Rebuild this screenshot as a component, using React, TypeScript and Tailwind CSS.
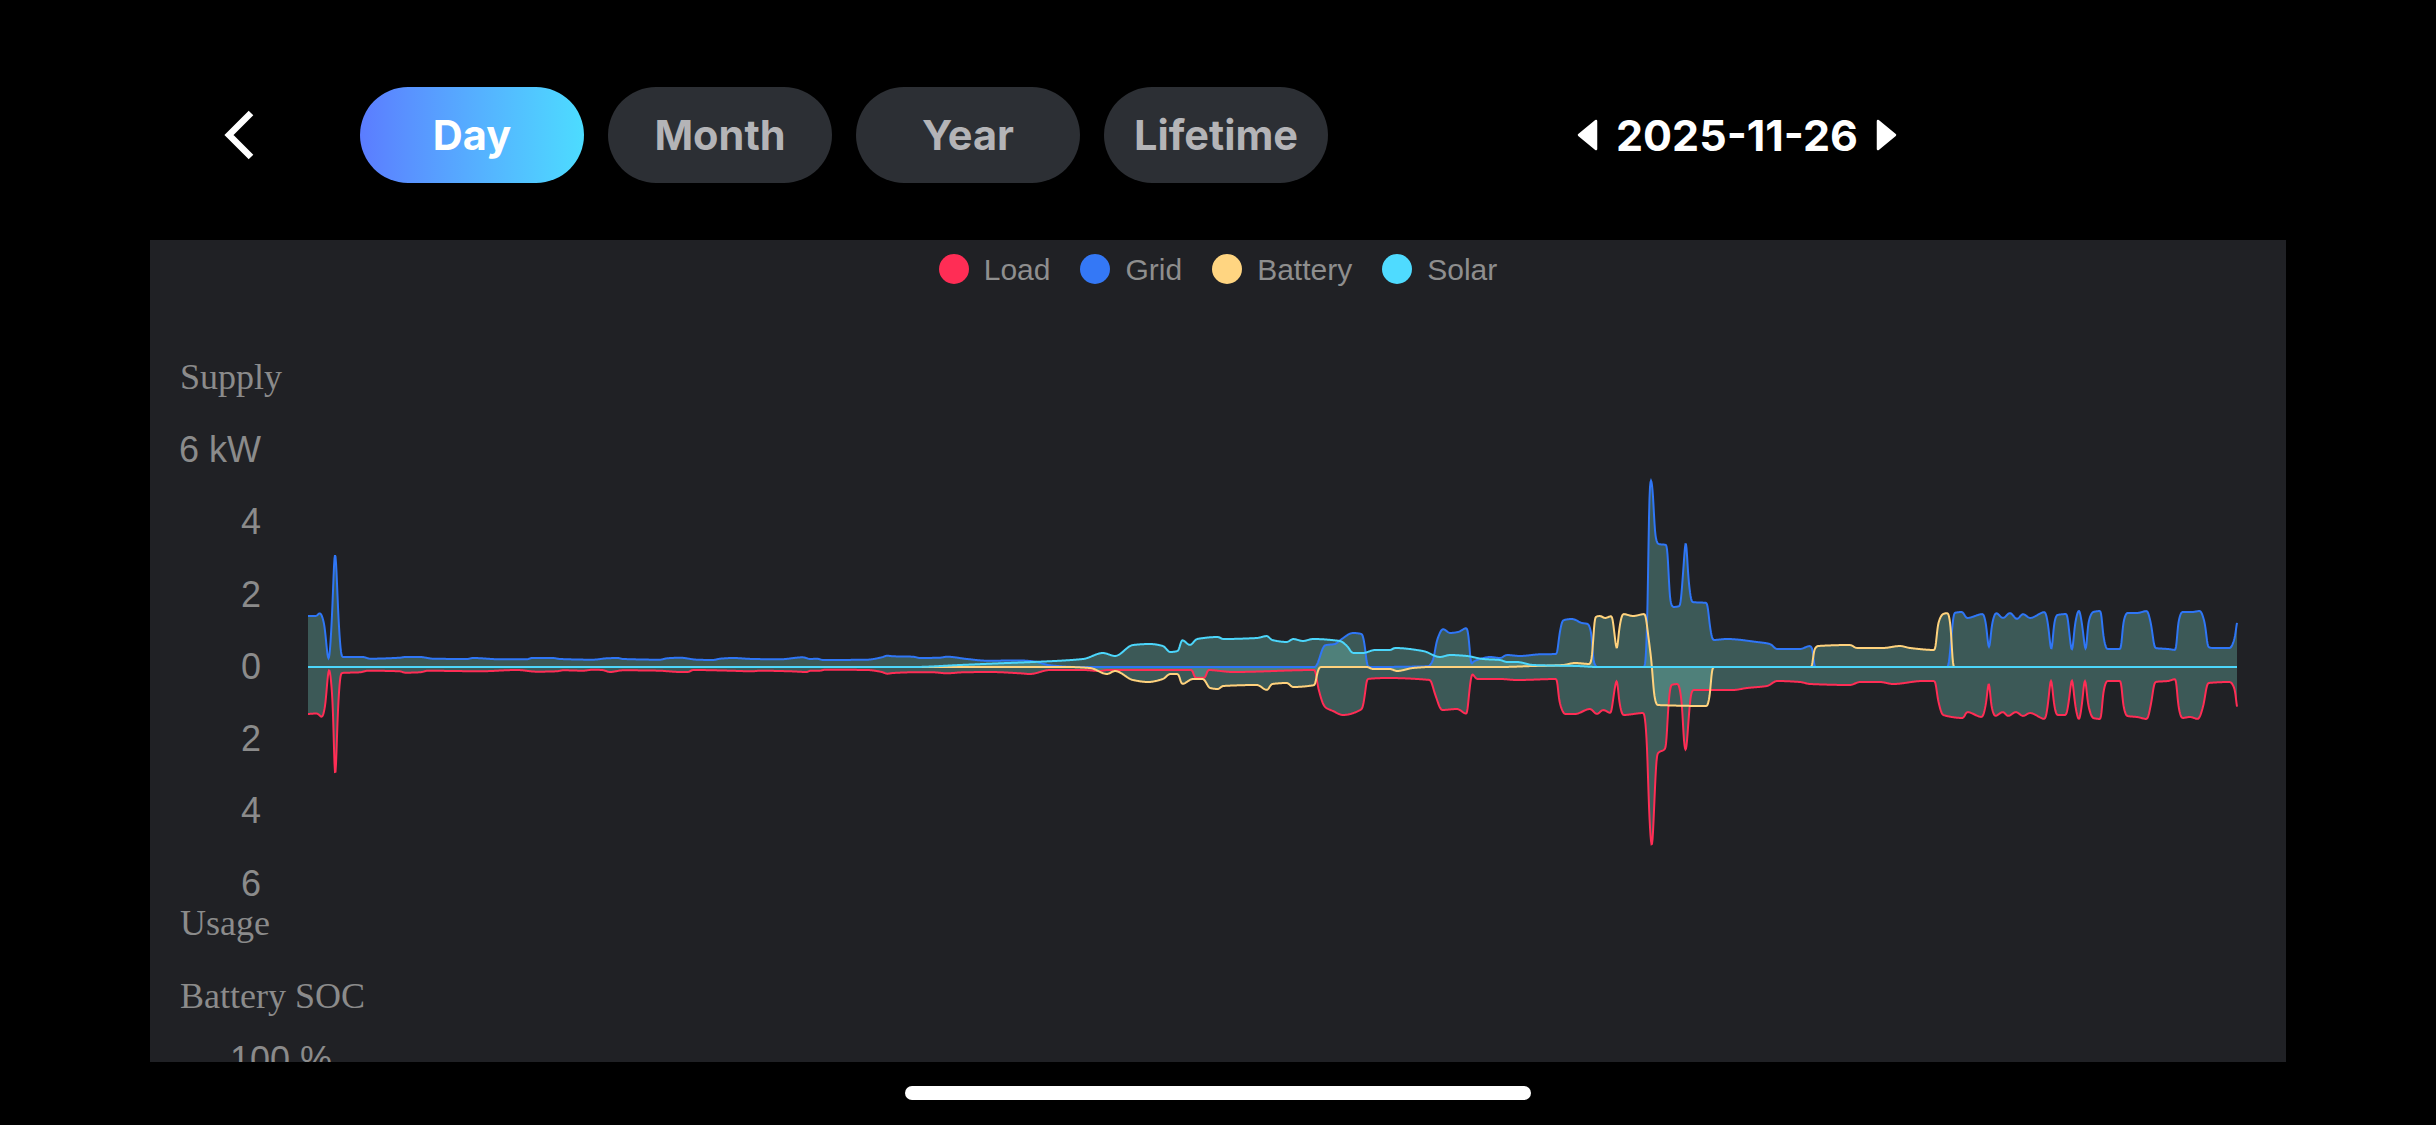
import * as React from "react";

type Point = [number, number];

// x is the page pixel, y the pixels above (or below, when negative) the zero line
const ZERO_Y = 667;

const GRID: Point[] = [
    [308, 51], [316, 51], [320, 54], [324, 44], [328.7, 6], [332, 50], [335, 119], [338.7, 44], [341.7, 10], [363, 10], [370, 8.3], [400, 9.3], [405, 10], [420, 10],
    [433, 8.3], [467, 8], [473, 9], [500, 7.7], [527, 7.7], [532, 9], [553, 9], [560, 8], [593, 7.3], [607, 8.7], [618, 9], [623, 8], [660, 7.3], [667, 8.7],
    [680, 9.3], [697, 7.3], [713, 7], [720, 8.3], [733, 9], [753, 8], [780, 7.7], [803, 9.7], [810, 8], [817, 8.3], [823, 7], [867, 7.3], [882, 9.7], [887, 11.3],
    [893, 10.7], [913, 10.3], [920, 9], [940, 9.3], [947, 10.3], [967, 8], [987, 6.3], [1020, 6.5], [1033, 5.7], [1050, 1.7], [1077, 0], [1315, 0],
    [1325, 21.7], [1335, 23], [1340, 26.7], [1353, 34], [1362, 33], [1365, 20], [1367, 2], [1370, 0], [1428, 0.7], [1433, 6.7], [1437, 26.7],
    [1443, 38], [1450, 34], [1458, 35], [1467, 39], [1469, 27], [1471, 2], [1473, 5], [1480, 8], [1490, 10], [1500, 9], [1507, 12], [1520, 11],
    [1540, 12.7], [1557, 13], [1559, 30], [1563, 46.7], [1572, 48], [1582, 44], [1588, 43], [1592, 30], [1593, 7], [1597, 0], [1645, 0], [1648, 73],
    [1649, 173], [1651, 189], [1653, 173], [1655, 133], [1658, 123], [1667, 122], [1668, 107], [1670, 67], [1673, 60], [1680, 61], [1683, 93],
    [1686, 129], [1688, 93], [1692, 65], [1707, 64], [1710, 40], [1713, 27], [1727, 28], [1757, 25], [1770, 23], [1777, 18], [1800, 18], [1810, 21],
    [1813, 17], [1814, 0], [1948, 0], [1952, 37], [1954, 54], [1962, 55], [1967, 49], [1983, 53], [1986, 43], [1989, 17], [1992, 43], [1996, 54],
    [2003, 49], [2010, 54], [2017, 48], [2023, 53], [2030, 49], [2045, 55], [2048, 43], [2051.5, 15], [2054, 43], [2057, 52], [2067, 53], [2069, 37],
    [2072, 15], [2075, 43], [2079, 57], [2082, 43], [2086, 15], [2088, 43], [2093, 55], [2101, 56], [2103, 33], [2107, 18], [2121, 18], [2123, 43],
    [2127, 54], [2137, 54], [2147, 56], [2151, 43], [2155, 19], [2168, 18], [2176, 17], [2178, 43], [2182, 55], [2192, 55], [2200, 56], [2205, 43],
    [2208, 20], [2213, 19], [2230, 19], [2235, 30], [2237, 47],
];

const LOAD: Point[] = [
    [308, -47], [317, -46.5], [322, -50], [325, -40], [329, -1], [333, -40], [335, -120], [338, -40], [341, -6], [360, -5.3], [368, -3.7], [400, -4.3], [405, -5.7],
    [420, -5.3], [428, -3.7], [453, -4], [480, -4.3], [517, -3], [537, -4.7], [557, -4.3], [563, -3.3], [583, -3.7], [593, -2.7], [602, -3], [610, -5], [623, -3.3],
    [660, -3.7], [668, -4.3], [680, -5], [688, -5], [693, -3], [730, -3.7], [752, -4.3], [760, -3.7], [790, -4.3], [807, -5], [810, -3.7], [820, -3.7], [825, -2.7],
    [867, -3], [882, -5], [887, -6.7], [893, -6], [913, -5.3], [933, -5.3], [947, -6.3], [963, -5.3], [990, -5], [1020, -6.3], [1030, -7], [1050, -3], [1083, -3],
    [1100, -4], [1107, -3], [1192, -3], [1195, -10.7], [1205, -10.7], [1208, -3],
    [1233, -5], [1315, -3], [1318, -20], [1325, -40], [1333, -44], [1343, -48], [1362, -42], [1365, -27], [1367, -12], [1387, -11], [1430, -13],
    [1435, -27], [1442, -43], [1457, -42], [1467, -47], [1469, -27], [1472, -7], [1477, -12], [1500, -12], [1517, -13], [1557, -12], [1559, -33],
    [1565, -47], [1575, -47], [1590, -42], [1597, -47], [1603, -43], [1611, -46], [1613, -33], [1617, -12], [1619, -33], [1623, -48], [1644, -46],
    [1647, -77], [1649, -143], [1652, -183], [1654, -143], [1657, -87], [1666, -81], [1668, -43], [1671, -18], [1678, -17], [1682, -37], [1684, -77],
    [1686, -85], [1688, -60], [1691, -27], [1693, -23], [1713, -23], [1733, -23], [1747, -21], [1767, -19], [1777, -14], [1800, -15], [1810, -17],
    [1850, -18], [1860, -15], [1880, -15], [1893, -17], [1923, -14], [1935, -14], [1938, -33], [1943, -48], [1963, -51], [1967, -45], [1982, -50],
    [1986, -37], [1989, -13], [1991, -37], [1995, -49], [2003, -45], [2008, -49], [2016, -45], [2023, -49], [2030, -46], [2045, -52], [2048, -37],
    [2051, -11], [2054, -37], [2057, -48], [2066, -48], [2069, -33], [2072, -11], [2075, -37], [2079, -53], [2082, -37], [2085, -11], [2088, -37],
    [2093, -51], [2101, -52], [2103, -27], [2107, -14], [2121, -14], [2123, -37], [2127, -49], [2137, -50], [2147, -52], [2151, -37], [2155, -15],
    [2168, -14], [2176, -12], [2178, -37], [2182, -51], [2190, -50], [2198, -52], [2203, -40], [2208, -16], [2230, -15], [2235, -23], [2237, -43],
];

const BATTERY: Point[] = [
    [308, 0], [1067, 0], [1090, -1], [1107, -7], [1115, -4], [1133, -13], [1148, -15], [1163, -12], [1170, -7], [1178, -7], [1182, -17], [1193, -12],
    [1203, -12], [1210, -21], [1218, -22], [1223, -19], [1257, -18], [1267, -23], [1272, -17], [1287, -16], [1293, -20], [1315, -18], [1317, -7],
    [1320, 0], [1367, 0], [1373, -2], [1390, -2], [1397, -4], [1413, -1], [1430, 0], [1500, 0], [1533, 1], [1563, 2], [1575, 4], [1590, 3], [1592, 10],
    [1595, 50], [1600, 51], [1605, 49], [1612, 51], [1614, 37], [1617, 16], [1619, 37], [1623, 53], [1633, 51], [1645, 53], [1648, 33], [1652, 0],
    [1654, -27], [1657, -38], [1707, -39], [1710, -27], [1712, -2], [1714, 0], [1812, 0], [1814, 17], [1818, 21], [1850, 22], [1857, 19], [1883, 19],
    [1900, 21], [1910, 19], [1935, 17], [1938, 43], [1943, 53], [1948, 54], [1951, 37], [1953, 0], [2237, 0],
];

const SOLAR: Point[] = [
    [308, 0], [913, 0], [960, 2], [1000, 3.7], [1033, 5], [1083, 8], [1103, 14], [1115, 11], [1133, 22], [1150, 23], [1163, 21], [1170, 15], [1178, 16], [1182, 27],
    [1190, 22], [1197, 28], [1218, 30], [1223, 28], [1257, 29], [1267, 31], [1272, 27], [1287, 25], [1293, 28], [1303, 26], [1313, 28], [1340, 26],
    [1347, 21], [1353, 14], [1363, 14], [1375, 17], [1390, 17], [1395, 19], [1423, 16], [1440, 10], [1450, 12], [1467, 11], [1483, 8], [1500, 7],
    [1507, 5], [1517, 5], [1533, 2], [1577, 1], [1597, 0], [2237, 0],
];

const SERIES = [
    { name: "Load", data: LOAD, color: "#ff2d55" },
    { name: "Grid", data: GRID, color: "#2f76f6" },
    { name: "Battery", data: BATTERY, color: "#ffd27d" },
    { name: "Solar", data: SOLAR, color: "#4cd6fb" },
];

const LEGEND = [
    { name: "Load", dot: "bg-[#ff2d55]" },
    { name: "Grid", dot: "bg-[#3478f6]" },
    { name: "Battery", dot: "bg-[#ffd581]" },
    { name: "Solar", dot: "bg-[#4fdbff]" },
];

const AXIS_TICKS = [
    { label: "6 kW", y: 462 },
    { label: "4", y: 534 },
    { label: "2", y: 607 },
    { label: "0", y: 679 },
    { label: "2", y: 751 },
    { label: "4", y: 823 },
    { label: "6", y: 896 },
];

const AXIS_TITLES = [
    { label: "Supply", y: 389 },
    { label: "Usage", y: 935 },
    { label: "Battery SOC", y: 1008 },
];

// Sample a monotone cubic through the points, then blur it a little:
// the real chart rounds its steep steps, a plain cubic leaves kinks there.
function linePath(points: Point[]) {
    const n = points.length;
    const slopes: number[] = [];
    for (let i = 0; i < n - 1; i++) {
        slopes.push((points[i + 1][1] - points[i][1]) / (points[i + 1][0] - points[i][0]));
    }
    const tangents: number[] = points.map((_, i) => {
        if (i === 0) return slopes[0];
        if (i === n - 1) return slopes[n - 2];
        if (slopes[i - 1] * slopes[i] <= 0) return 0;
        return (2 * slopes[i - 1] * slopes[i]) / (slopes[i - 1] + slopes[i]);
    });

    const step = 0.5;
    const samples: number[] = [];
    let seg = 0;
    for (let x = points[0][0]; x <= points[n - 1][0]; x += step) {
        while (seg < n - 2 && x > points[seg + 1][0]) seg++;
        const h = points[seg + 1][0] - points[seg][0];
        const t = (x - points[seg][0]) / h;
        const t2 = t * t;
        const t3 = t2 * t;
        samples.push(
            (2 * t3 - 3 * t2 + 1) * points[seg][1] +
            (t3 - 2 * t2 + t) * h * tangents[seg] +
            (-2 * t3 + 3 * t2) * points[seg + 1][1] +
            (t3 - t2) * h * tangents[seg + 1]
        );
    }

    const kernel = [-4, -3, -2, -1, 0, 1, 2, 3, 4].map((k) => Math.exp(-(k * step * k * step) / (2 * 0.8 * 0.8)));
    const total = kernel.reduce((a, b) => a + b, 0);
    const last = samples.length - 1;
    let d = "";
    samples.forEach((_, i) => {
        let value = 0;
        kernel.forEach((w, j) => {
            value += w * samples[Math.min(last, Math.max(0, i + j - 4))];
        });
        const x = points[0][0] + i * step;
        d += `${i === 0 ? "M" : "L"}${x} ${(ZERO_Y - value / total).toFixed(2)}`;
    });
    return d;
}

function PeriodButton(props: { label: string, active?: boolean }) {
    if (props.active) {
        return (
            <div className="flex h-[96px] w-[224px] items-center justify-center rounded-[48px] bg-gradient-to-r from-[#5b7cff] to-[#4cdcff] text-white">
                {props.label}
            </div>
        );
    }
    return (
        <div className="flex h-[96px] w-[224px] items-center justify-center rounded-[48px] bg-[#2c2f34] text-[#b4b4b7]">
            {props.label}
        </div>
    );
}

function Chart() {
    return (
        <svg viewBox="150 298 2135 764" className="block h-[764px] w-[2135px]">
            {AXIS_TITLES.map((t) => (
                <text key={t.label} x="180" y={t.y} className="fill-[#8b8b8b] font-['Liberation_Serif'] text-[36px]">{t.label}</text>
            ))}
            {AXIS_TICKS.map((t) => (
                <text key={t.y} x="261" y={t.y} textAnchor="end" className="fill-[#8b8b8b] font-['Liberation_Sans'] text-[36px]">{t.label}</text>
            ))}
            <text x="332" y="1072" textAnchor="end" className="fill-[#8b8b8b] font-['Liberation_Sans'] text-[36px]">100 %</text>

            {SERIES.map((s) => (
                <path key={s.name} d={`${linePath(s.data)}L2237 ${ZERO_Y}L308 ${ZERO_Y}Z`} fill="#7ed9cd" fillOpacity="0.3" />
            ))}
            {SERIES.map((s) => (
                <path key={s.name} d={linePath(s.data)} fill="none" stroke={s.color} strokeWidth="2" />
            ))}
        </svg>
    );
}

export default function App() {
    return (
        <div className="flex h-[1125px] w-[2436px] flex-col overflow-hidden bg-black font-['Inter',sans-serif]">
            <div className="flex h-[240px] pt-[87px]">
                <div className="flex h-[96px] w-[360px] items-center pl-[223px]">
                    <svg width="32" height="50" viewBox="0 0 32 50" fill="none">
                        <path d="M28 3 L6 25 L28 47" stroke="white" strokeWidth="6.5" />
                    </svg>
                </div>
                <div className="flex gap-[24px] text-[41.5px] font-bold">
                    <PeriodButton label="Day" active />
                    <PeriodButton label="Month" />
                    <PeriodButton label="Year" />
                    <PeriodButton label="Lifetime" />
                </div>
                <div className="ml-[249px] flex h-[96px] items-center gap-[18px] text-[43px] font-bold text-white">
                    <svg width="21" height="32" viewBox="0 0 21 32">
                        <path d="M19 2 L2 16 L19 30 Z" fill="white" stroke="white" strokeWidth="2.5" strokeLinejoin="round" />
                    </svg>
                    <span>2025-11-26</span>
                    <svg width="21" height="32" viewBox="0 0 21 32">
                        <path d="M2 2 L19 16 L2 30 Z" fill="white" stroke="white" strokeWidth="2.5" strokeLinejoin="round" />
                    </svg>
                </div>
            </div>

            <div className="ml-[150px] h-[822px] w-[2136px] overflow-hidden bg-[#202125]">
                <div className="flex h-[58px] items-center justify-center gap-[30px] font-['Liberation_Sans',sans-serif] text-[30px] text-[#8e8e8e]">
                    {LEGEND.map((l) => (
                        <div key={l.name} className="flex items-center gap-[15px]">
                            <div className={`h-[30px] w-[30px] rounded-full ${l.dot}`} />
                            <span>{l.name}</span>
                        </div>
                    ))}
                </div>
                <Chart />
            </div>

            <div className="flex flex-1 items-start justify-center pt-[24px]">
                <div className="h-[14px] w-[626px] rounded-full bg-white" />
            </div>
        </div>
    );
}
